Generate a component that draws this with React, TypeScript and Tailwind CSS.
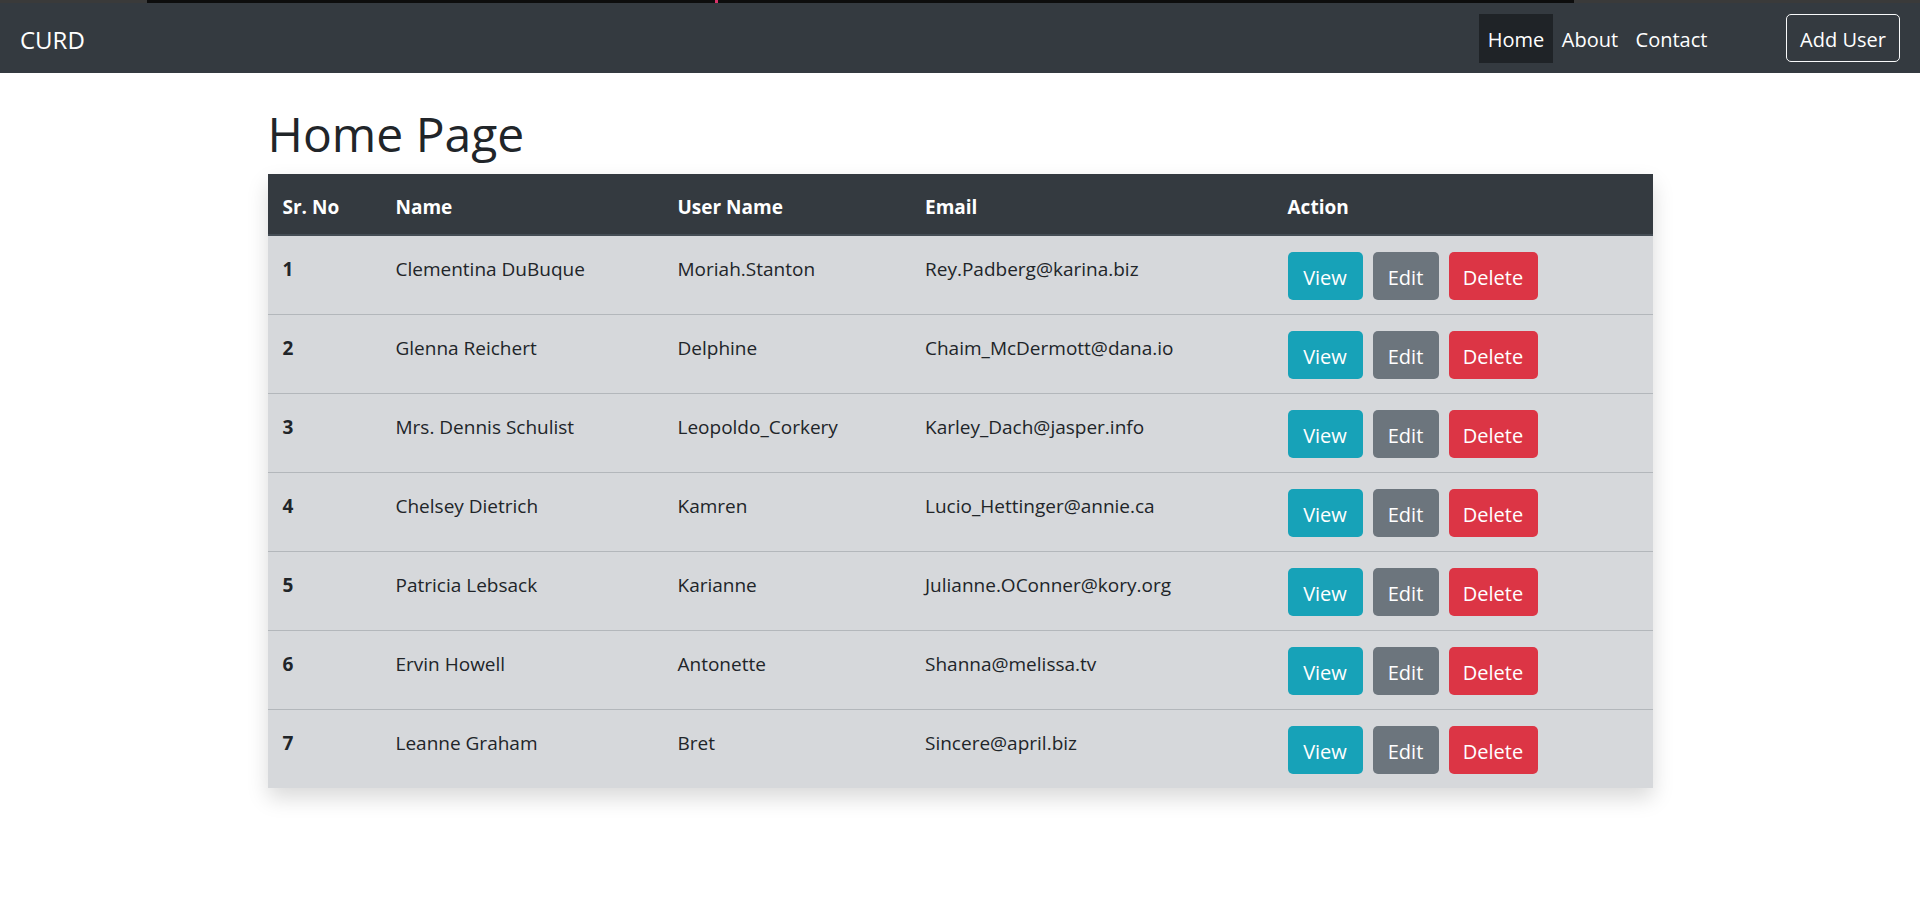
import React from "react";

const users = [
  { id: 1, name: "Clementina DuBuque", username: "Moriah.Stanton", email: "Rey.Padberg@karina.biz" },
  { id: 2, name: "Glenna Reichert", username: "Delphine", email: "Chaim_McDermott@dana.io" },
  { id: 3, name: "Mrs. Dennis Schulist", username: "Leopoldo_Corkery", email: "Karley_Dach@jasper.info" },
  { id: 4, name: "Chelsey Dietrich", username: "Kamren", email: "Lucio_Hettinger@annie.ca" },
  { id: 5, name: "Patricia Lebsack", username: "Karianne", email: "Julianne.OConner@kory.org" },
  { id: 6, name: "Ervin Howell", username: "Antonette", email: "Shanna@melissa.tv" },
  { id: 7, name: "Leanne Graham", username: "Bret", email: "Sincere@april.biz" },
];

const cols = "grid grid-cols-[113px_282px_247.5px_362.5px_380px]";

export default function App() {
  return (
    <div className="min-h-[903px] bg-white text-[#212529]" style={{ fontFamily: '"Open Sans", "Noto Sans", Arial, sans-serif' }}>
      <div className="flex h-[3px] bg-[#2b2b2b]">
        <div className="w-[147px] bg-[#3a3a3a]" />
        <div className="w-[568px] bg-[#0d0d0d]" />
        <div className="w-[3px] bg-[#d8336a]" />
        <div className="w-[856px] bg-[#0d0d0d]" />
        <div className="flex-1 bg-[#3a3a3a]" />
      </div>
      <nav className="flex h-[70px] items-center bg-[#343a40] pl-[20px] pr-[20px]">
        <div className="pt-[4px] text-[24px] leading-[36px] text-white">CURD</div>
        <ul className="ml-auto flex items-center">
          <li className="flex h-[49px] w-[74px] items-center justify-center bg-[#1f2327] pt-[4px] text-[20px] text-white">Home</li>
          <li className="flex h-[49px] w-[74px] items-center justify-center pt-[4px] text-[20px] text-white">About</li>
          <li className="flex h-[49px] w-[89px] items-center justify-center pt-[4px] text-[20px] text-white">Contact</li>
        </ul>
        <button className="ml-[70px] flex h-[48px] w-[114px] items-center justify-center rounded-[5px] border border-[#f8f9fa] pt-[4px] text-[20px] text-white">
          Add User
        </button>
      </nav>
      <main className="mx-auto w-[1385px] pt-[31px]">
        <h1 className="mb-[10px] h-[60px] text-[48px] font-medium leading-[60px] text-[#212529]">Home Page</h1>
        <div className="shadow-[0_10px_20px_rgba(0,0,0,0.15)]">
          <div className={`${cols} border-b-2 border-[#454d55] bg-[#343a40] text-[19px] font-bold leading-[30px] text-white`}>
            {["Sr. No", "Name", "User Name", "Email", "Action"].map((h) => (
              <div key={h} className="px-[15px] pb-[12px] pt-[18px]">{h}</div>
            ))}
          </div>
          {users.map((u, i) => (
            <div key={u.id} className={`${cols} bg-[#d6d8db] text-[19px] leading-[30px] ${i > 0 ? "border-t border-[#b3b7bb]" : ""}`}>
              <div className="px-[15px] pb-[12px] pt-[18px] font-bold">{u.id}</div>
              <div className="px-[15px] pb-[12px] pt-[18px]">{u.name}</div>
              <div className="px-[15px] pb-[12px] pt-[18px]">{u.username}</div>
              <div className="px-[15px] pb-[12px] pt-[18px]">{u.email}</div>
              <div className="flex gap-[10px] px-[15px] pb-[14px] pt-[16px]">
                <button className="flex h-[48px] w-[75px] items-center justify-center rounded-[5px] bg-[#17a2b8] pt-[3px] text-[20px] text-white">View</button>
                <button className="flex h-[48px] w-[66px] items-center justify-center rounded-[5px] bg-[#6c757d] pt-[3px] text-[20px] text-white">Edit</button>
                <button className="flex h-[48px] w-[89px] items-center justify-center rounded-[5px] bg-[#dc3545] pt-[3px] text-[20px] text-white">Delete</button>
              </div>
            </div>
          ))}
        </div>
      </main>
    </div>
  );
}
